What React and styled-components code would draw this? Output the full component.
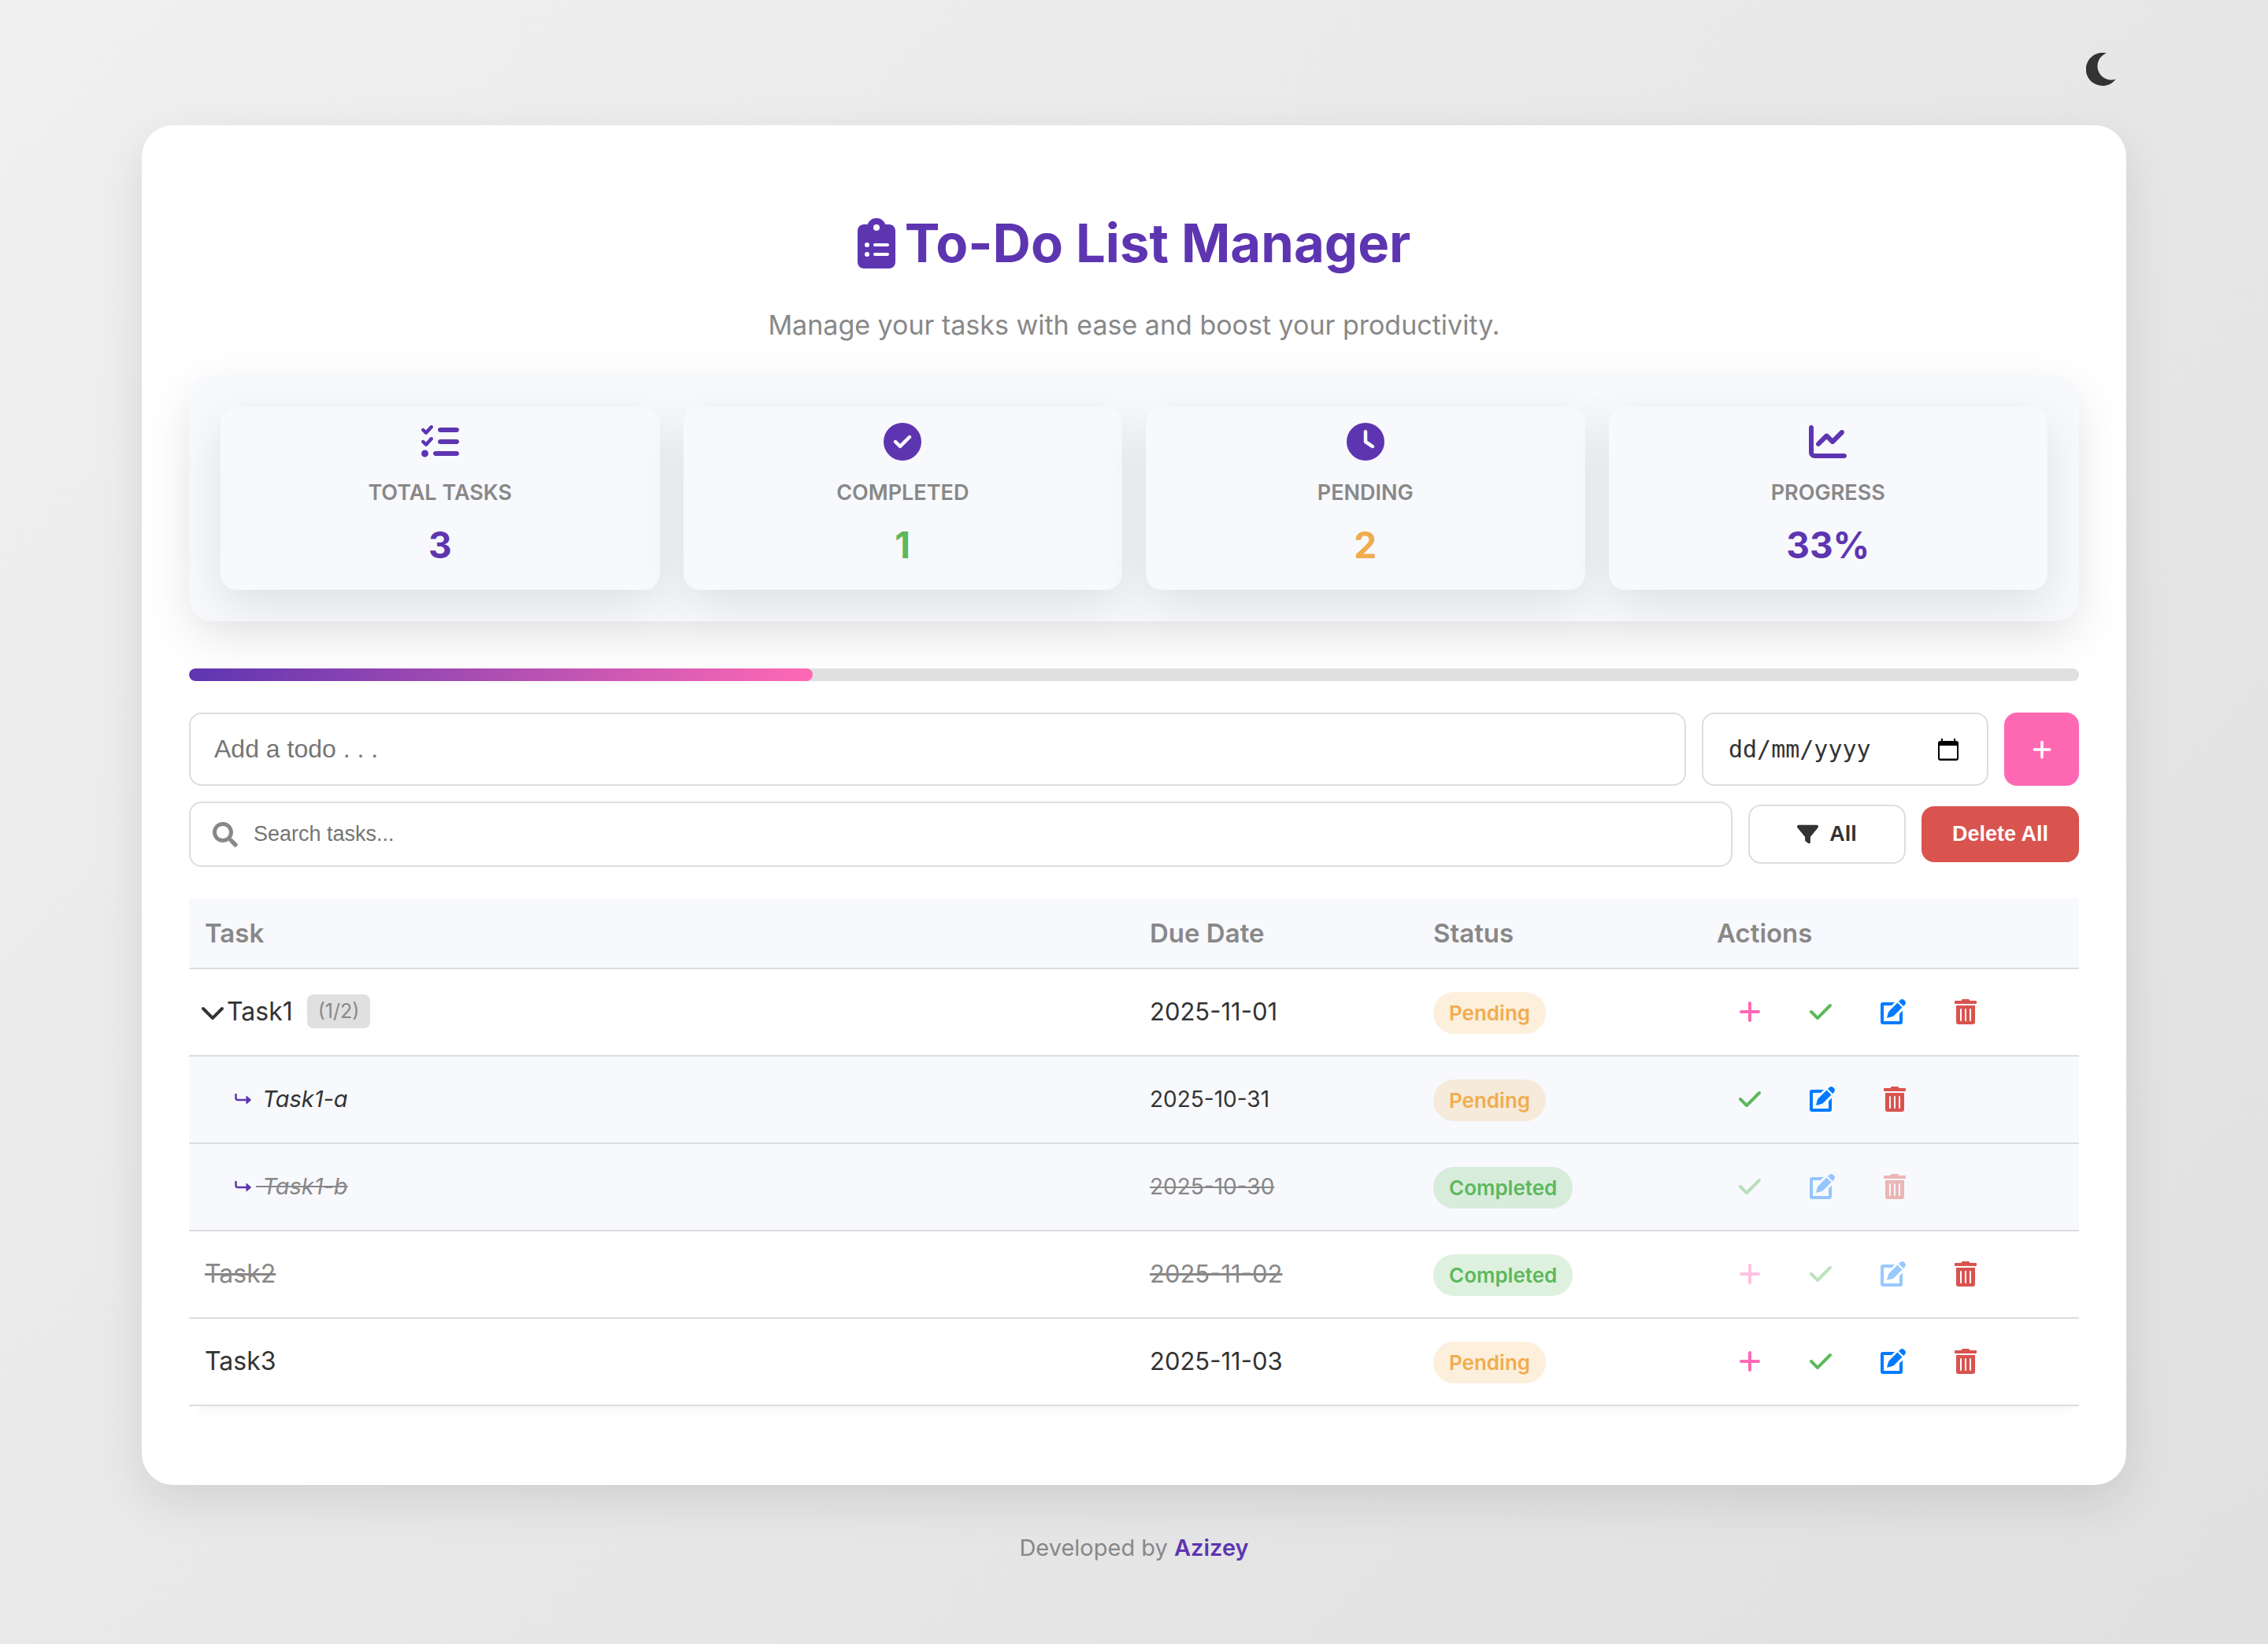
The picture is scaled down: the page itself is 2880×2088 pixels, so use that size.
import React from "react";
import styled, { createGlobalStyle } from "styled-components";
import {
  FaClipboardList,
  FaListCheck,
  FaCircleCheck,
  FaClock,
  FaChartLine,
  FaFilter,
  FaPlus,
  FaCheck,
  FaChevronDown,
} from "react-icons/fa6";
import { FaSearch } from "react-icons/fa";

const c = {
  primary: "#5e35b1",
  accent: "#ff69b4",
  success: "#5cb85c",
  warning: "#f0ad4e",
  danger: "#d9534f",
  info: "#007bff",
  text: "#333333",
  muted: "#888888",
  line: "#dddddd",
  panel: "#f8f9fd",
};

const shadow = "0 20px 60px rgba(0, 0, 0, 0.1)";
const sans = 'Inter, "Open Sans", sans-serif';
const control = '"Liberation Sans", Arial, sans-serif';

const GlobalStyle = createGlobalStyle`
  *, *::before, *::after { box-sizing: border-box; }
  body {
    margin: 0;
    min-height: 100vh;
    background: linear-gradient(135deg, #f0f0f0, #e0e0e0);
    font-family: ${sans};
    color: ${c.text};
  }
  button, input { font-family: ${control}; margin: 0; }
  button { cursor: pointer; }
  svg { display: block; flex: none; }
`;

const Page = styled.div`
  width: 87.5%;
  margin: 0 auto;
`;

const TopBar = styled.header`
  display: flex;
  justify-content: flex-end;
  padding: 67px 9px 50px 0;
`;

const ThemeButton = styled.button`
  display: flex;
  padding: 0;
  border: 0;
  background: none;
  color: ${c.text};
`;

const Card = styled.main`
  padding: 102px 60px 100px;
  border-radius: 40px;
  background: #fff;
  box-shadow: ${shadow};
`;

const Title = styled.h1`
  display: flex;
  align-items: center;
  justify-content: center;
  gap: 12px;
  margin: 0 0 32px;
  color: ${c.primary};
  font-size: 67px;
  font-weight: 700;
  line-height: 96px;
  svg { font-size: 64px; width: 48px; }
`;

const Subtitle = styled.p`
  margin: 0 0 40px;
  color: ${c.muted};
  font-size: 34px;
  line-height: 48px;
  text-align: center;
`;

const Stats = styled.section`
  display: grid;
  grid-template-columns: repeat(4, 1fr);
  gap: 30px;
  padding: 40px;
  border-radius: 30px;
  background: ${c.panel};
  box-shadow: ${shadow};
`;

const Stat = styled.div`
  display: flex;
  flex-direction: column;
  align-items: center;
  padding: 20px;
  border-radius: 20px;
  background: ${c.panel};
  box-shadow: ${shadow};
  color: ${c.primary};
  svg { font-size: 48px; }
`;

const StatLabel = styled.h2`
  margin: 20px 0 8px;
  color: ${c.muted};
  font-size: 27px;
  font-weight: 600;
  line-height: 42px;
`;

const StatValue = styled.p`
  margin: 0;
  color: ${(p) => p.$color};
  font-size: 46px;
  font-weight: 700;
  line-height: 74px;
`;

const Track = styled.div`
  height: 16px;
  margin: 60px 0 40px;
  border-radius: 8px;
  background: #e0e0e0;
  overflow: hidden;
`;

const Fill = styled.div`
  height: 100%;
  border-radius: 8px;
  background: linear-gradient(90deg, ${c.primary}, ${c.accent});
`;

const Row = styled.form`
  display: flex;
  align-items: center;
  gap: 20px;
  margin-bottom: ${(p) => (p.$last ? "40px" : "20px")};
`;

const Field = styled.label`
  display: flex;
  align-items: center;
  gap: 20px;
  flex: ${(p) => (p.$date ? "0 0 364px" : "1")};
  min-width: 0;
  height: ${(p) => (p.$small ? "83px" : "93px")};
  padding: 0 ${(p) => (p.$date ? "36px" : "30px")} 0 ${(p) => (p.$small ? "28px" : "30px")};
  border: 2px solid ${c.line};
  border-radius: 16px;
  background: #fff;
  color: ${c.muted};
  font-size: 32px;
`;

const TextInput = styled.input`
  flex: 1;
  min-width: 0;
  height: 100%;
  padding: 0;
  border: 0;
  outline: 0;
  background: none;
  color: ${c.text};
  font-size: ${(p) => (p.$small ? "27px" : "32px")};
  &::placeholder { color: #757575; opacity: 1; }
`;

const DateInput = styled(TextInput)`
  padding-left: 2px;
  font-family: "DejaVu Sans Mono", monospace;
  font-size: 30px;
  &::placeholder { color: ${c.text}; }
`;

const PickerButton = styled.button`
  padding: 0;
  border: 0;
  background: none;
`;

const AddButton = styled.button`
  display: flex;
  align-items: center;
  justify-content: center;
  flex: none;
  width: 95px;
  height: 93px;
  border: 0;
  border-radius: 16px;
  background: ${c.accent};
  color: #fff;
  font-size: 28px;
`;

const ToolButton = styled.button`
  display: flex;
  align-items: center;
  justify-content: center;
  flex: none;
  gap: 14px;
  width: 200px;
  height: ${(p) => (p.$danger ? "71px" : "75px")};
  padding: 0;
  border: ${(p) => (p.$danger ? "0" : `2px solid ${c.line}`)};
  border-radius: 16px;
  background: ${(p) => (p.$danger ? c.danger : "#fff")};
  color: ${(p) => (p.$danger ? "#fff" : c.text)};
  font-size: 27px;
  font-weight: 700;
`;

const Table = styled.table`
  width: 100%;
  table-layout: fixed;
  border-collapse: separate;
  border-spacing: 0;
  box-shadow: 0 14px 16px -12px rgba(0, 0, 0, 0.06);
`;

const Th = styled.th`
  width: ${(p) => p.$width};
  height: 90px;
  padding: 0 20px;
  border-bottom: 2px solid ${c.line};
  background: ${c.panel};
  color: ${c.muted};
  font-size: 33px;
  font-weight: 600;
  text-align: left;
`;

const Td = styled.td`
  height: 111px;
  padding: 0 20px 2px;
  border-bottom: 2px solid ${c.line};
`;

const StatusTd = styled(Td)`
  padding: 2px 20px 0;
`;

const Tr = styled.tr`
  background: ${(p) => (p.$sub ? c.panel : "#fff")};
`;

const Name = styled.div`
  display: flex;
  align-items: center;
  padding-left: ${(p) => (p.$sub ? "38px" : "0")};
`;

const Label = styled.span`
  color: ${(p) => (p.$done ? c.muted : c.text)};
  font-size: ${(p) => (p.$sub ? "29px" : "32px")};
  font-style: ${(p) => (p.$sub ? "italic" : "normal")};
  text-decoration: ${(p) => (p.$done ? "line-through" : "none")};
  white-space: pre;
`;

const DueDate = styled(Label)`
  font-size: ${(p) => (p.$sub ? "28px" : "31px")};
  font-style: normal;
`;

const Toggle = styled.button`
  display: flex;
  margin-left: -6px;
  padding: 0 2px 0 0;
  border: 0;
  background: none;
  color: ${c.text};
  font-size: 32px;
`;

const Count = styled.span`
  margin-left: 18px;
  padding: 0 14px;
  border-radius: 8px;
  background: #e0e0e0;
  color: ${c.muted};
  font-size: 25px;
  line-height: 43px;
`;

const Pill = styled.span`
  display: inline-block;
  vertical-align: middle;
  padding: 0 20px;
  border-radius: 27px;
  background: ${(p) => (p.$done ? "rgba(92, 184, 92, 0.2)" : "rgba(240, 173, 78, 0.2)")};
  color: ${(p) => (p.$done ? c.success : c.warning)};
  font-size: 26px;
  font-weight: 600;
  line-height: 53px;
`;

const Actions = styled.div`
  display: flex;
  align-items: center;
  gap: 22px;
  padding-left: 8px;
`;

const Action = styled.button`
  display: flex;
  padding: 20px;
  border: 0;
  background: none;
  color: ${(p) => p.$color};
  font-size: 32px;
  opacity: ${(p) => (p.disabled ? 0.4 : 1)};
`;

const PlusIcon = styled(FaPlus)`
  width: 28px;
`;

const CheckIcon = styled(FaCheck)`
  width: 28px;
`;

const Footer = styled.footer`
  padding: 59px 0;
  color: ${c.muted};
  font-size: 29px;
  line-height: 42px;
  text-align: center;
`;

const Author = styled.a`
  color: ${c.primary};
  font-weight: 600;
  text-decoration: none;
`;

const MoonIcon = () => (
  <svg width="42" height="42" viewBox="0 0 42 42" fill="currentColor" aria-hidden="true">
    <path d="M26 .6A21 21 0 1 0 37.700 33.400A17.300 17.300 0 0 1 26 .6z" />
  </svg>
);

const EditIcon = () => (
  <svg width="32" height="32" viewBox="0 0 32 32" fill="currentColor" aria-hidden="true">
    <path d="M18 4H3a3 3 0 0 0-3 3v22a3 3 0 0 0 3 3h22a3 3 0 0 0 3-3V14.500L24 18.500V28H4V8h10z" />
    <path d="M21.500 4.500l6 6L17 21q-1 1-2.500 1.300L9 23.800q-1 .2-.8-.8l1.500-5.500q.3-1.500 1.300-2.500z" />
    <path d="M23 3l1.800-1.800q2.600-2.300 5.200 0l.8.800q2.300 2.600 0 5.200L29 9z" />
  </svg>
);

const TrashIcon = () => (
  <svg width="28" height="32" viewBox="0 0 28 32" fill="currentColor" aria-hidden="true">
    <path d="M9.300.6Q9.700 0 10.500 0h7q.8 0 1.200.6L19.500 2H27a1 1 0 0 1 1 1v2a1 1 0 0 1-1 1H1a1 1 0 0 1-1-1V3a1 1 0 0 1 1-1h7.500z" />
    <path
      fillRule="evenodd"
      d="M2 8h24v21a3 3 0 0 1-3 3H5a3 3 0 0 1-3-3zM7 13v14a1 1 0 0 0 2 0V13a1 1 0 0 0-2 0zM13 13v14a1 1 0 0 0 2 0V13a1 1 0 0 0-2 0zM19 13v14a1 1 0 0 0 2 0V13a1 1 0 0 0-2 0z"
    />
  </svg>
);

const CalendarIcon = () => (
  <svg width="26" height="28" viewBox="0 0 26 28" aria-hidden="true">
    <path d="M4 0h2v3h14V0h2v3h1a3 3 0 0 1 3 3v19a3 3 0 0 1-3 3H3a3 3 0 0 1-3-3V6a3 3 0 0 1 3-3h1zM2 9v16.500h22V9z" fillRule="evenodd" />
  </svg>
);

const ArrowDrawing = styled.svg`
  margin-right: 6px;
`;

const SubArrow = () => (
  <ArrowDrawing width="21" height="14" viewBox="0 0 21 14" aria-hidden="true">
    <path d="M1.500 1v4.500Q1.500 8 4 8h11" fill="none" stroke={c.primary} strokeWidth="2.500" strokeLinecap="round" />
    <path d="M14.500 3.500q0-1 1-.5l5 4.200q.8.800 0 1.600l-5 4.200q-1 .5-1-.5z" fill={c.primary} />
  </ArrowDrawing>
);

const STATS = [
  { label: "TOTAL TASKS", value: "3", color: c.primary, Icon: FaListCheck },
  { label: "COMPLETED", value: "1", color: c.success, Icon: FaCircleCheck },
  { label: "PENDING", value: "2", color: c.warning, Icon: FaClock },
  { label: "PROGRESS", value: "33%", color: c.primary, Icon: FaChartLine },
];

const TASKS = [
  { name: "Task1", date: "2025-11-01", count: "(1/2)" },
  { name: "Task1-a", date: "2025-10-31", sub: true },
  { name: "Task1-b", date: "2025-10-30", sub: true, done: true },
  { name: "Task2", date: "2025-11-02", done: true },
  { name: "Task3", date: "2025-11-03" },
];

function TaskRow({ name, date, count, sub, done }) {
  return (
    <Tr $sub={sub}>
      <Td>
        <Name $sub={sub}>
          {count && (
            <Toggle type="button" aria-label="Toggle subtasks">
              <FaChevronDown />
            </Toggle>
          )}
          {sub && <SubArrow />}
          <Label $sub={sub} $done={done}>{sub ? ` ${name}` : name}</Label>
          {count && <Count>{count}</Count>}
        </Name>
      </Td>
      <Td><DueDate $sub={sub} $done={done}>{date}</DueDate></Td>
      <StatusTd><Pill $done={done}>{done ? "Completed" : "Pending"}</Pill></StatusTd>
      <Td>
        <Actions>
          {!sub && (
            <Action type="button" aria-label="Add subtask" $color={c.accent} disabled={done}>
              <PlusIcon />
            </Action>
          )}
          <Action type="button" aria-label="Complete" $color={c.success} disabled={done}>
            <CheckIcon />
          </Action>
          <Action type="button" aria-label="Edit" $color={c.info} disabled={done}>
            <EditIcon />
          </Action>
          <Action type="button" aria-label="Delete" $color={c.danger} disabled={done && sub}>
            <TrashIcon />
          </Action>
        </Actions>
      </Td>
    </Tr>
  );
}

export default function App() {
  const progress = 33;
  return (
    <>
      <GlobalStyle />
      <Page>
        <TopBar>
          <ThemeButton type="button" aria-label="Toggle theme"><MoonIcon /></ThemeButton>
        </TopBar>
        <Card>
          <Title>
            <FaClipboardList />
            To-Do List Manager
          </Title>
          <Subtitle>Manage your tasks with ease and boost your productivity.</Subtitle>
          <Stats>
            {STATS.map(({ label, value, color, Icon }) => (
              <Stat key={label}>
                <Icon />
                <StatLabel>{label}</StatLabel>
                <StatValue $color={color}>{value}</StatValue>
              </Stat>
            ))}
          </Stats>
          <Track role="progressbar" aria-label="Progress" aria-valuenow={progress} aria-valuemin={0} aria-valuemax={100}>
            <Fill style={{ width: `${progress}%` }} />
          </Track>
          <Row>
            <Field>
              <TextInput type="text" aria-label="Add a todo" placeholder="Add a todo . . ." />
            </Field>
            <Field $date>
              <DateInput type="text" aria-label="Due date" placeholder="dd/mm/yyyy" />
              <PickerButton type="button" aria-label="Open calendar"><CalendarIcon /></PickerButton>
            </Field>
            <AddButton type="button" aria-label="Add task"><FaPlus /></AddButton>
          </Row>
          <Row $last>
            <Field $small>
              <FaSearch />
              <TextInput $small type="text" aria-label="Search tasks" placeholder="Search tasks..." />
            </Field>
            <ToolButton type="button"><FaFilter />All</ToolButton>
            <ToolButton type="button" $danger>Delete All</ToolButton>
          </Row>
          <Table>
            <thead>
              <tr>
                <Th $width="50%">Task</Th>
                <Th $width="15%">Due Date</Th>
                <Th $width="15%">Status</Th>
                <Th $width="20%">Actions</Th>
              </tr>
            </thead>
            <tbody>
              {TASKS.map((t) => <TaskRow key={t.name} {...t} />)}
            </tbody>
          </Table>
        </Card>
        <Footer>
          Developed by <Author href="#">Azizey</Author>
        </Footer>
      </Page>
    </>
  );
}
